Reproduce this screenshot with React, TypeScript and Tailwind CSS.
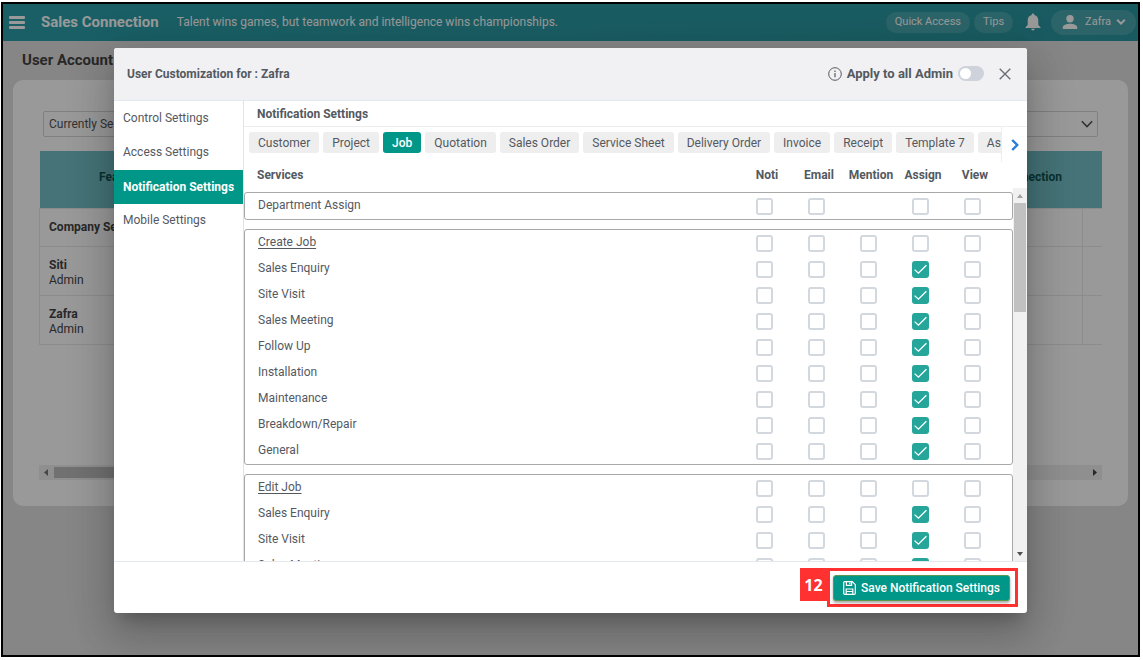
import React from "react";

const settingsLinks = ["Control Settings", "Access Settings", "Notification Settings", "Mobile Settings"];

const tabs = [
  "Customer",
  "Project",
  "Job",
  "Quotation",
  "Sales Order",
  "Service Sheet",
  "Delivery Order",
  "Invoice",
  "Receipt",
  "Template 7",
  "Asset",
];

const channels = ["Noti", "Email", "Mention", "Assign", "View"];

const jobTypes = [
  "Sales Enquiry",
  "Site Visit",
  "Sales Meeting",
  "Follow Up",
  "Installation",
  "Maintenance",
  "Breakdown/Repair",
  "General",
];

type Group = { heading?: string; rows: string[]; without?: string; checked?: string };

const groups: Group[] = [
  { rows: ["Department Assign"], without: "Mention" },
  { heading: "Create Job", rows: jobTypes, checked: "Assign" },
  { heading: "Edit Job", rows: jobTypes, checked: "Assign" },
];

function Check({ label, checked }: { label: string; checked: boolean }) {
  return (
    <label className="mx-auto grid size-[17px] place-items-center">
      <input
        type="checkbox"
        aria-label={label}
        defaultChecked={checked}
        className="peer col-start-1 row-start-1 size-[17px] appearance-none rounded-[3px] border-2 border-[#d3d8df] bg-white checked:border-[#26a69a] checked:bg-[#26a69a]"
      />
      <svg
        viewBox="0 0 17 17"
        className="pointer-events-none invisible col-start-1 row-start-1 size-[17px] peer-checked:visible"
        fill="none"
        stroke="white"
        strokeWidth="1.3"
      >
        <path d="M2.6 8.600 L6.4 12.200 L14.4 4.200" />
      </svg>
    </label>
  );
}

function ServiceRow({ name, group, isHeading }: { name: string; group: Group; isHeading?: boolean }) {
  return (
    <tr className="h-[26px]">
      <th
        scope="row"
        className={
          isHeading
            ? "pb-[2px] pl-[13px] text-left font-normal underline underline-offset-2"
            : "pb-[2px] pl-[13px] text-left font-normal"
        }
      >
        {name}
      </th>
      {channels.map((channel) => (
        <td key={channel}>
          {channel !== group.without && (
            <Check label={name + " " + channel} checked={!isHeading && channel === group.checked} />
          )}
        </td>
      ))}
      <td />
    </tr>
  );
}

function ServiceGroup({ group }: { group: Group }) {
  return (
    <div className="shrink-0 rounded-[3px] border border-[#a8a8a8]">
      <table className="w-full table-fixed border-collapse">
        <colgroup>
          <col />
          <col className="w-[52px]" />
          <col className="w-[52px]" />
          <col className="w-[52px]" />
          <col className="w-[52px]" />
          <col className="w-[52px]" />
          <col className="w-[14px]" />
        </colgroup>
        <tbody>
          {group.heading && <ServiceRow name={group.heading} group={group} isHeading />}
          {group.rows.map((row) => (
            <ServiceRow key={row} name={row} group={group} />
          ))}
        </tbody>
      </table>
    </div>
  );
}

function TopBar() {
  return (
    <header className="flex h-[37px] shrink-0 items-center bg-gradient-to-r from-[#2a9fa9] to-[#2a97a0] pr-[2px] pb-px pl-[6px] text-white">
      <button type="button" aria-label="Menu" className="flex h-[13px] w-4 flex-col justify-between">
        <span className="h-[3px] w-full rounded-[1px] bg-white" />
        <span className="h-[3px] w-full rounded-[1px] bg-white" />
        <span className="h-[3px] w-full rounded-[1px] bg-white" />
      </button>
      <span className="ml-4 text-[15px] font-bold">Sales Connection</span>
      <span className="ml-[18px] text-[12px]">Talent wins games, but teamwork and intelligence wins championships.</span>
      <div className="ml-auto flex items-center text-[11px]">
        <button type="button" className="h-[21px] rounded-full bg-white/15 px-[9px]">Quick Access</button>
        <button type="button" className="ml-1 h-[21px] rounded-full bg-white/15 px-[9px]">Tips</button>
        <button type="button" aria-label="Alerts" className="ml-3">
          <svg viewBox="0 0 16 18" className="h-[18px] w-4" fill="white">
            <path d="M8 .6a1.300 1.300 0 0 1 1.300 1.400C11.800 2.600 13.300 4.600 13.300 7.300V12l2.200 2.200v.9H.5v-.9L2.700 12V7.300C2.700 4.600 4.200 2.600 6.700 2A1.300 1.300 0 0 1 8 .6zM6.200 15.800h3.600a1.800 1.800 0 0 1-3.600 0z" />
          </svg>
        </button>
        <button type="button" className="ml-[10px] flex h-[25px] items-center rounded-full bg-white/15 pr-[10px] pl-[11px]">
          <svg viewBox="0 0 16 16" className="size-4" fill="white">
            <circle cx="8" cy="4.700" r="3.700" />
            <path d="M.8 15v-1.500C.8 10.800 4.500 9.700 8 9.700s7.200 1.100 7.200 3.800V15z" />
          </svg>
          <span className="ml-[7px]">Zafra</span>
          <svg viewBox="0 0 10 8" className="ml-[5px] h-2 w-[10px]" fill="none" stroke="white" strokeWidth="2">
            <path d="M1.200 1.800 5 5.600l3.800-3.800" />
          </svg>
        </button>
      </div>
    </header>
  );
}

function AccountsPage() {
  return (
    <main className="flex flex-1 flex-col bg-[#dfdfdf] px-[10px] text-[#444]">
      <h1 className="flex h-[39px] items-center pl-[9px] text-[15px] font-bold">User Account</h1>
      <section className="rounded-[10px] bg-white px-[26px] pt-[31px] pb-[26px]">
        <div className="relative mr-[4px] ml-1">
          <select aria-label="Users" className="h-[26px] w-full appearance-none rounded-[2px] border border-[#d5d5d5] bg-white pl-[5px] text-[12px] text-[#555]">
            <option>Currently Selected</option>
          </select>
          <svg viewBox="0 0 12 8" className="pointer-events-none absolute top-[9px] right-[5px] h-2 w-3" fill="none" stroke="#555" strokeWidth="1.600">
            <path d="M.8 1.200 6 6.600l5.200-5.400" />
          </svg>
        </div>
        <table className="mt-[14px] w-full table-fixed border-collapse text-[12px]">
          <colgroup>
            <col className="w-[160px]" />
            <col />
            <col className="w-[110px]" />
            <col className="w-[20px]" />
          </colgroup>
          <thead>
            <tr className="h-[57px] bg-[#74c0c7] font-bold text-[#0e5450]">
              <th scope="col" className="pb-1">Feature</th>
              <td />
              <th scope="col" className="pb-1 text-right"><span className="pr-5">Connection</span></th>
              <td />
            </tr>
          </thead>
          <tbody>
            <tr className="h-[38px] border border-r-0 border-[#eaeaea]">
              <th scope="row" className="pl-[9px] text-left font-bold">Company Setup</th>
              <td />
              <td className="border-r border-[#eaeaea]" />
              <td />
            </tr>
            {["Siti", "Zafra"].map((user) => (
              <tr key={user} className="h-[49px] border border-r-0 border-[#eaeaea]">
                <th scope="row" className="pt-1 pl-[9px] text-left leading-[15px] font-normal">
                  <span className="block font-bold">{user}</span>
                  Admin
                </th>
                <td />
                <td className="border-r border-[#eaeaea]" />
                <td />
              </tr>
            ))}
          </tbody>
        </table>
        <div className="mt-[120px] flex h-[15px] items-center justify-between bg-[#eeeeee] px-[5px]">
          <svg viewBox="0 0 4 7" className="h-[7px] w-1" fill="#777"><path d="M4 0v7L0 3.500z" /></svg>
          <span className="mr-auto ml-[6px] h-[11px] w-3/5 bg-[#bdbdbd]" />
          <svg viewBox="0 0 4 7" className="h-[7px] w-1" fill="#444"><path d="M0 0v7l4-3.500z" /></svg>
        </div>
      </section>
    </main>
  );
}

function SettingsDialog() {
  return (
    <div
      role="dialog"
      aria-label="User Customization"
      className="mx-[111px] mt-[44px] mb-[42px] flex min-h-0 flex-1 flex-col overflow-hidden rounded-[3px] bg-white text-[12px] text-[#54595f] shadow-[0_11px_15px_-7px_rgba(0,0,0,0.2),0_24px_38px_3px_rgba(0,0,0,0.14),0_9px_46px_8px_rgba(0,0,0,0.12)]"
    >
      <header className="flex h-[53px] shrink-0 items-center border-b border-[#e4e9f0] bg-[#f1f1f4] pr-4 pb-px pl-[13px]">
        <h2 className="text-[12px] font-bold">User Customization for : Zafra</h2>
        <svg viewBox="0 0 14 14" className="ml-auto size-[14px]" fill="none" stroke="#54595f">
          <circle cx="7" cy="7" r="6.300" />
          <path d="M7 6v4.200M7 3.600v1.300" strokeWidth="1.200" />
        </svg>
        <label className="ml-[5px] flex items-center text-[13px] font-bold">
          Apply to all Admin
          <span className="ml-[5px] grid items-center">
            <input type="checkbox" role="switch" className="peer col-start-1 row-start-1 h-[15px] w-[26px] appearance-none rounded-full bg-[#ced3db] checked:bg-[#009688]" />
            <span className="pointer-events-none col-start-1 row-start-1 ml-[2px] size-[11px] rounded-full bg-white peer-checked:ml-[13px]" />
          </span>
        </label>
        <button type="button" aria-label="Close" className="ml-[15px]">
          <svg viewBox="0 0 12 12" className="size-3" fill="none" stroke="#666b71" strokeWidth="1.300">
            <path d="M.7.7l10.600 10.600M11.300.7.7 11.300" />
          </svg>
        </button>
      </header>

      <div className="flex min-h-0 flex-1">
        <nav className="flex w-[130px] shrink-0 flex-col border-r border-[#e3e3e6] pt-px">
          {settingsLinks.map((link) => (
            <a
              key={link}
              href="#"
              className={
                link === "Notification Settings"
                  ? "flex h-[34px] items-center bg-[#009688] pl-[9px] font-bold whitespace-nowrap text-white"
                  : "flex h-[34px] items-center pb-[2px] pl-[9px]"
              }
            >
              {link}
            </a>
          ))}
        </nav>

        <section className="flex min-w-0 flex-1 flex-col">
          <h3 className="flex h-[26px] shrink-0 items-center border-b border-[#ededed] pl-[13px] font-bold">Notification Settings</h3>
          <div className="flex h-[35px] shrink-0">
            <div className="flex min-w-0 flex-1 gap-1 overflow-hidden pt-[5px] pl-[5px]">
              {tabs.map((tab) => (
                <button
                  key={tab}
                  type="button"
                  className={
                    tab === "Job"
                      ? "h-[21px] shrink-0 rounded-[3px] bg-[#009688] px-[9px] font-medium text-white"
                      : "h-[21px] shrink-0 rounded-[3px] bg-[#eeeeee] px-[9px]"
                  }
                >
                  {tab}
                </button>
              ))}
            </div>
            <button type="button" aria-label="More tabs" className="flex w-[26px] items-center justify-center border-l border-[#eeeeee]">
              <svg viewBox="0 0 8 12" className="h-3 w-2" fill="none" stroke="#2a7bd9" strokeWidth="2.400">
                <path d="M1.200 1 6.200 6l-5 5" />
              </svg>
            </button>
          </div>
          <table className="mb-px w-full shrink-0 table-fixed">
            <colgroup>
              <col />
              <col className="w-[52px]" />
              <col className="w-[52px]" />
              <col className="w-[52px]" />
              <col className="w-[52px]" />
              <col className="w-[52px]" />
              <col className="w-[26px]" />
            </colgroup>
            <thead>
              <tr className="h-[25px]">
                <th scope="col" className="pl-[13px] text-left font-bold">Services</th>
                {channels.map((channel) => (
                  <th key={channel} scope="col" className="font-bold">{channel}</th>
                ))}
                <td />
              </tr>
            </thead>
          </table>
          <div className="flex min-h-0 flex-1">
            <div className="flex min-w-0 flex-1 flex-col gap-[9px] overflow-y-auto pt-1 [scrollbar-width:none]">
              {groups.map((group, index) => (
                <ServiceGroup key={index} group={group} />
              ))}
            </div>
            <div className="flex w-[14px] shrink-0 flex-col items-center bg-[#f1f1f1] py-[5px]">
              <svg viewBox="0 0 6 4" className="mt-px h-1 w-[6px]" fill="#a3a3a3"><path d="M0 4h6L3 0z" /></svg>
              <span className="mt-[5px] h-[109px] w-3 bg-[#c1c1c1]" />
              <svg viewBox="0 0 6 4" className="mt-auto h-1 w-[6px]" fill="#505050"><path d="M0 0h6L3 4z" /></svg>
            </div>
          </div>
        </section>
      </div>

      <footer className="flex h-[52px] shrink-0 items-start justify-end border-t border-[#e4e9f0] pt-[6px] pr-[9px]">
        <span className="flex h-[33px] w-[27px] items-center justify-center bg-[#ff3131] font-['Open_Sans',sans-serif] text-[16px] font-bold text-white">12</span>
        <div className="border-[3px] border-[#ff3131] pt-1 pr-[5px] pb-[3px] pl-[3px]">
          <button type="button" className="flex h-[26px] items-center rounded-[3px] border border-[#5a9a50] bg-[#009688] px-[9px] font-medium text-white shadow-[0_2px_3px_rgba(0,0,0,0.35)]">
            <svg viewBox="0 0 13 14" className="mr-[5px] h-[14px] w-[13px]" fill="none" stroke="white" strokeWidth="1.200">
              <path d="M.7 1.700a1 1 0 0 1 1-1h7.600l3 3v8.600a1 1 0 0 1-1 1H1.700a1 1 0 0 1-1-1zM3.400.7v3.600h5.200V.7M6.900 1.600v1.600M3.200 13.200V8h6.600v5.200M3.400 10.500h6" />
            </svg>
            Save Notification Settings
          </button>
        </div>
      </footer>
    </div>
  );
}

export default function App() {
  return (
    <div className="h-screen overflow-hidden bg-white pt-[2px] pr-[3px] pb-[3px] pl-px font-[Roboto,sans-serif]">
      <div className="relative flex h-full flex-col overflow-hidden border-2 border-black">
        <TopBar />
        <AccountsPage />
        <div className="absolute inset-0 flex flex-col bg-black/40">
          <SettingsDialog />
        </div>
      </div>
    </div>
  );
}
